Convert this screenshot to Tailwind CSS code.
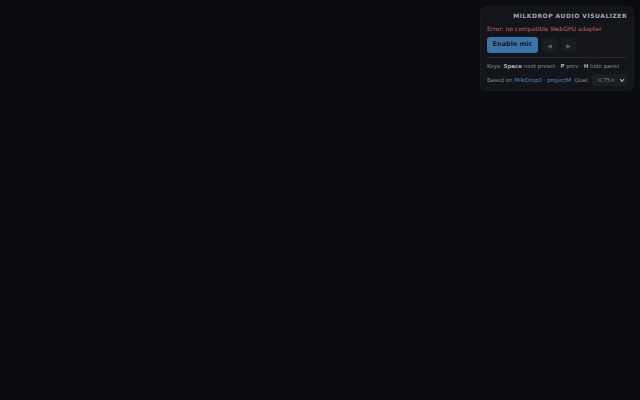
<!doctype html>
<html>
<head>
<meta charset="utf-8">
<script src="https://cdn.jsdelivr.net/npm/@tailwindcss/browser@4"></script>
</head>
<body class="m-0 h-[400px] w-[640px] overflow-hidden bg-[#0a0c10] font-['DejaVu_Sans',sans-serif]">
<div class="flex h-[400px] w-[640px] items-start justify-end p-[6px]">
  <div class="flex w-[154px] flex-col rounded-[6px] border border-[#16191e] bg-[#13151a] px-[6px] pt-[4px] pb-[4px] text-[5.5px] text-[#85898f]">
    <div class="text-right text-[6px] leading-[9px] font-bold tracking-[0.5px] text-[#a3a7b0]">MILKDROP AUDIO VISUALIZER</div>
    <div class="mt-[4px] text-[6px] leading-[9px] text-[#c0626c]">Error: no compatible WebGPU adapter</div>
    <div class="mt-[4px] flex items-center gap-[4px]">
      <div class="flex h-[16px] w-[51px] items-center justify-center rounded-[3px] bg-[#3d74a8] text-[6.5px] font-bold text-[#101d2c]">Enable mic</div>
      <div class="flex h-[14px] w-[15px] items-center justify-center rounded-[3px] bg-[#191c21] text-[6px] text-[#5c6067]">◀</div>
      <div class="flex h-[14px] w-[15px] items-center justify-center rounded-[3px] bg-[#191c21] text-[6px] text-[#5c6067]">▶</div>
    </div>
    <div class="mt-[4px] h-px bg-[#26292f]"></div>
    <div class="mt-[4px] text-[5.5px] leading-[9px] whitespace-nowrap">Keys: <b class="text-[#a8acb3]">Space</b> next preset · <b class="text-[#a8acb3]">P</b> prev · <b class="text-[#a8acb3]">H</b> hide panel</div>
    <div class="mt-[3px] flex items-center justify-between whitespace-nowrap">
      <div>Based on <span class="text-[#5389c0]">MilkDrop3</span> · <span class="text-[#5389c0]">projectM</span>&nbsp; Qual:</div>
      <div class="flex h-[12px] w-[35px] items-center justify-between rounded-[3px] bg-[#1b1e23] pr-[2px] pl-[6px] text-[#85898f]">
        <span>0.75×</span>
        <svg width="6" height="5" viewBox="0 0 6 5" fill="none" stroke="#a8acb3" stroke-width="1.2"><path d="M1 1.2 3 3.4 5 1.2"/></svg>
      </div>
    </div>
  </div>
</div>
</body>
</html>
